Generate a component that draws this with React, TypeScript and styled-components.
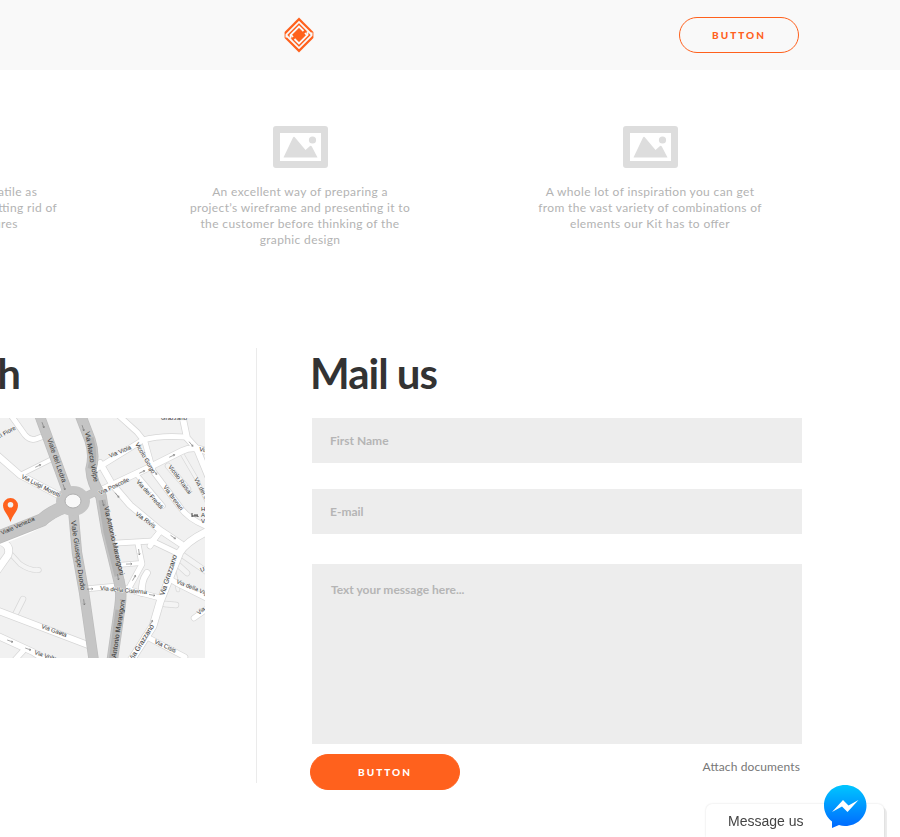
import React from 'react';
import styled, { createGlobalStyle, css } from 'styled-components';

const orange = '#ff611d';

const GlobalStyle = createGlobalStyle`
  * { box-sizing: border-box; }
  html, body { margin: 0; overflow-x: hidden; }
  body {
    background: #fff;
    font-family: Lato, 'Open Sans', sans-serif;
    color: #333;
  }
`;

const Header = styled.header`
  background: #f9f9f9;
`;

const container = css`
  margin-left: -225px;
  margin-right: 75px;
`;

const HeaderInner = styled.div`
  ${container}
  height: 70px;
  display: grid;
  grid-template-columns: 1fr auto 1fr;
  align-items: center;
  padding: 0 26px 0 23px;
`;

const LogoLink = styled.a`
  grid-column: 2;
  display: flex;
`;

const Pill = styled.button<{ $solid?: boolean }>`
  width: ${p => (p.$solid ? 150 : 120)}px;
  height: 36px;
  padding: 0;
  border: 1px solid ${orange};
  border-radius: 18px;
  background: ${p => (p.$solid ? orange : 'transparent')};
  color: ${p => (p.$solid ? '#fff' : orange)};
  font: 900 10px/16px Lato, sans-serif;
  letter-spacing: 2px;
  text-transform: uppercase;
  cursor: pointer;
`;

const HeaderAction = styled.div`
  display: flex;
  justify-content: flex-end;
`;

const Features = styled.section`
  ${container}
  display: grid;
  grid-template-columns: repeat(3, 1fr);
  padding-top: 56px;
`;

const Feature = styled.article`
  display: flex;
  flex-direction: column;
  align-items: center;
  gap: 16px;
`;

const FeatureText = styled.p`
  margin: 0;
  color: #b3b3b3;
  font-size: 12px;
  line-height: 16px;
  letter-spacing: 0.03em;
  font-feature-settings: 'liga' 1;
  text-align: center;
  white-space: pre-line;
`;

const Contact = styled.main`
  ${container}
  display: grid;
  grid-template-columns: 430fr 546fr;
  column-gap: 51px;
  padding: 100px 23px 53px 0;
`;

const Heading = styled.h2`
  margin: 0 0 20px;
  font-size: 42px;
  line-height: 50px;
  font-weight: 700;
  letter-spacing: -1px;
  white-space: nowrap;
`;

const MapSvg = styled.svg`
  display: block;
  width: 100%;
  height: 240px;
`;

const MailColumn = styled.section`
  border-left: 1px solid #ebebeb;
  padding-left: 53px;
`;

const Form = styled.form`
  display: flex;
  flex-direction: column;
`;

const Fields = styled.div`
  display: flex;
  flex-direction: column;
  padding-left: 2px;
`;

const fieldStyle = css`
  display: block;
  width: 100%;
  border: 0;
  border-radius: 0;
  background: #ededed;
  color: #333;
  font: 700 12px/16px Lato, sans-serif;
  outline-color: ${orange};
  &::placeholder { color: #b5b5b5; opacity: 1; }
`;

const TextField = styled.input`
  ${fieldStyle}
  height: 45px;
  padding: 0 18px;
  margin-bottom: 26px;
`;

const MessageField = styled.textarea`
  ${fieldStyle}
  height: 180px;
  margin-top: 4px;
  padding: 18px 19px;
  resize: none;
`;

const Actions = styled.div`
  display: flex;
  justify-content: space-between;
  align-items: flex-start;
  margin-bottom: -7px;
  padding: 10px 2px 0 0;
`;

const AttachLink = styled.a`
  margin-top: 5px;
  color: #777;
  font-size: 12px;
  line-height: 16px;
  letter-spacing: 0.01em;
  font-feature-settings: 'liga' 1;
  text-decoration: none;
`;

const ChatButton = styled.button`
  position: fixed;
  right: 16px;
  bottom: 0;
  width: 178px;
  height: 33px;
  padding: 0 0 0 22px;
  border: 0;
  border-radius: 6px 6px 0 0;
  background: #fff;
  box-shadow: 0 0 2px rgba(0, 0, 0, 0.15), 3px 3px 0 #ececec;
  color: #444;
  font: 400 14px/32px 'Liberation Sans', Arial, sans-serif;
  text-align: left;
  cursor: pointer;
`;

const ChatIcon = styled.svg`
  position: absolute;
  right: 17px;
  bottom: 8px;
`;

function Logo() {
  return (
    <svg width="30" height="36" viewBox="0 0 30 36" role="img" aria-label="Logo">
      <path d="M15 0.5 L29.4 15 V21 L15 35.500 L0.600 21 V15 Z" fill={orange} />
      <g fill="none" stroke="#f9f9f9" strokeWidth="1.8">
        <path d="M2.400 20.500 V17.500 L15 4.900 L27.600 17.500" />
        <path d="M27.600 15.500 V18.500 L15 31.100 L2.400 18.500" />
        <path d="M6.500 21.500 V18 L15 9.500 L19.500 14" />
        <path d="M23.500 14.500 V18 L15 26.500 L10.500 22" />
        <path d="M6.800 17.700 L9 20 M23.200 18.300 L21 16" />
      </g>
    </svg>
  );
}

function Picture() {
  return (
    <svg width="55" height="42" viewBox="0 0 55 42" aria-hidden="true">
      <path
        fill="#ddd"
        fillRule="evenodd"
        d="M3 0H52A3 3 0 0 1 55 3V39A3 3 0 0 1 52 42H3A3 3 0 0 1 0 39V3A3 3 0 0 1 3 0ZM7 7V35H48V7Z"
      />
      <path fill="#ddd" d="M10.5 31.5L20 11.5Q21 10 22 11.5L32.5 24L37 20Q38 19.3 38.8 20.5L44.5 31.5Z" />
      <circle cx="39.5" cy="14" r="3.6" fill="#ddd" />
    </svg>
  );
}

const lanes: [string, number][] = [
  ['M10 -4 L25 17 Q30 23 36 21 L44 18', 5],
  ['M-4 36 L20 57 L64 80', 6],
  ['M22 56 L52 41', 4],
  ['M96 51 L143 22 Q160 17 186 19', 5],
  ['M117 -4 L137 14 L145 24 L153 53 L180 89 Q188 101 208 109', 5],
  ['M182 -4 L187 20 L197 31 L208 58', 6],
  ['M97 74 L150 49 L182 33 Q194 27 208 34', 6],
  ['M100 45 L112 66 L130 87 L160 112 L181 126', 6],
  ['M137 57 L163 88', 4],
  ['M150 128 L160 113', 5],
  ['M117 125 L152 123 L177 135', 5],
  ['M152 123 L159 115', 5],
  ['M208 113 Q187 123 180 134 L168 164 L160 184 L153 208 L130 244', 7],
  ['M85 171 L117 168 L137 174 L160 180', 5],
  ['M138 126 L142 146 L129 170', 5],
  ['M118 147 L141 145', 4],
  ['M147 155 Q141 163 142 175', 6],
  ['M168 160 L180 167 L208 181', 5],
  ['M145 218 L185 239', 5],
  ['M194 200 L208 190', 5],
  ['M-4 192 L88 227', 6],
  ['M-4 217 L33 234 L44 241', 6],
  ['M23 233 L13 244', 5],
  ['M2 124 Q11 128 8 137 L-4 154', 7],
];

const paths: [string, number][] = [
  ['M168 48 L188 71', 5],
  ['M182 36 L196 60 L208 86', 3],
  ['M14 199 L23 181', 5],
  ['M10 135 L20 146 Q30 153 39 152', 4],
  ['M165 186 L176 187', 5],
  ['M174 143 L187 155', 5],
  ['M181 136 L207 154', 5],
  ['M174 152 L178 172', 3],
];

const avenues: [string, number][] = [
  ['M39 -4 L69 78', 9],
  ['M80 -4 L90 22 Q95 37 91 51 Q92 66 101 78 L107 114 L119 163 Q122 174 120 188 L112 244', 10],
  ['M73 90 L77 135 L84 174 L94 244', 9],
  ['M67 88 Q52 93 42 102 L-6 121', 12],
  ['M78 82 L99 72', 7],
];

type Label = [string, number, number, number, number?];

const avenueLabels: Label[] = [
  ['Viale del Ledra', 47, 21, 71],
  ['Via Marco Volpe', 85, 14, 80],
  ['Viale Giuseppe Duodo', 71, 103, 82],
  ['Via Antonio Marangoni', 104, 89, 77],
  ['Antonio Marangoni', 116, 240, -81],
  ['Viale Venezia', 2, 117, -24, 6],
];

const laneLabels: Label[] = [
  ['oberi Fiore', -9, 25, -29],
  ['Via Luigi Moretti', 21, 60, 27],
  ['Via Viola', 110, 40, -23],
  ['Vicolo Gorgo', 135, 26, 60],
  ['Via Poscolle', 100, 77, -25],
  ['Via dei Freddi', 136, 64, 48],
  ['Via Brenari', 163, 69, 54],
  ['Vicolo Raisai', 168, 49, 53],
  ['Via dei Sarti', 194, 61, 62],
  ['Via Rivis', 135, 97, 35],
  ['Via della Cisterna', 100, 172, 5],
  ['Via Grazzano', 164, 178, -72, 7],
  ['Via Grazzano', 132, 244, -58, 7],
  ['Via della Vigna', 176, 165, 22],
  ['Via Gaeta', 41, 210, 20],
  ['Via Cisis', 154, 225, 25],
  ['Via Volta', 34, 236, 18],
  ['Grazzano', 161, 2, 0],
  ['Via', 199, 33, 10],
  ['Via', 199, 197, -40],
  ['U', 201, 154, -20],
  ['H', 201, 93, 0],
  ['A', 201, 99, 0],
  ['V', 201, 105, 0],
];

const arrows: [number, number, number][] = [
  [43, 7, 70], [83, 10, 72], [64, 69, 70], [103, 85, 75], [84, 184, 82], [118, 159, 80],
  [172, 38, -25], [142, 54, -25], [191, 26, 50], [117, 77, 50], [38, 48, -25], [155, 54, 55],
  [90, 171, -3], [152, 177, 10], [139, 134, 82], [129, 146, -2], [134, 160, -60], [151, 205, -60],
  [173, 119, 35], [10, 223, 20], [28, 231, 20],
];

function Roads({ items, fill, edge }: { items: [string, number][]; fill: string; edge: string }) {
  return (
    <g fill="none" strokeLinecap="round" strokeLinejoin="round">
      {items.map(([d, w]) => <path key={`e${d}`} d={d} stroke={edge} strokeWidth={w + 1.4} />)}
      {items.map(([d, w]) => <path key={d} d={d} stroke={fill} strokeWidth={w} />)}
    </g>
  );
}

function StreetNames({ items, size }: { items: Label[]; size: number }) {
  return (
    <>
      {items.map(([name, x, y, angle, own = size]) => (
        <text key={`${name}-${x}-${y}`} fontSize={own} transform={`translate(${x} ${y}) rotate(${angle})`}>
          {name}
        </text>
      ))}
    </>
  );
}

function StreetMap() {
  return (
    <MapSvg viewBox="-225 0 430 240" preserveAspectRatio="xMaxYMid slice" role="img" aria-label="Street map">
      <rect x="-225" width="430" height="240" fill="#f1f1f1" />
      <Roads items={paths} fill="#f4f4f4" edge="#d8d8d8" />
      <Roads items={lanes} fill="#fff" edge="#d6d6d6" />
      <path d="M-6 129 L30 114 L50 104" fill="none" stroke="#fff" strokeWidth="2" />
      <Roads items={avenues} fill="#c5c5c5" edge="#bcbcbc" />
      <path d="M90 20 Q95 37 91 51 M102 82 L107 114 L118 158 M119 192 L112 244" fill="none" stroke="#b4b4b4" strokeWidth="7" />
      <ellipse cx="73" cy="83" rx="17" ry="15" fill="#c5c5c5" />
      <ellipse cx="73" cy="83" rx="8" ry="7" fill="#f8f8f8" stroke="#b0b0b0" />
      <g fill="none" stroke="#777" strokeWidth="0.6">
        {arrows.map(([x, y, a]) => (
          <path key={`${x}-${y}`} transform={`translate(${x} ${y}) rotate(${a})`} d="M-3 0H3M1.5 -1L3 0L1.5 1" />
        ))}
      </g>
      <path d="M192 95V99M192 98H198V99M194 97H198" stroke="#444" fill="none" />
      <g fontFamily="'Liberation Sans', Arial, sans-serif" fill="#333">
        <StreetNames items={avenueLabels} size={7} />
        <g stroke="#f4f4f4" strokeWidth="0.8" paintOrder="stroke">
          <StreetNames items={laneLabels} size={6} />
        </g>
      </g>
      <path
        fill={orange}
        fillRule="evenodd"
        d="M10.5 104C8 96 3 93 3 87.5A7.5 7.5 0 0 1 18 87.5C18 93 13 96 10.5 104ZM10.5 84A2.8 2.8 0 1 0 10.5 89.6A2.8 2.8 0 1 0 10.5 84Z"
      />
    </MapSvg>
  );
}

function Messenger() {
  return (
    <ChatIcon width="44" height="44" viewBox="0 0 44 44" aria-hidden="true">
      <defs>
        <linearGradient id="messenger-fill" x1="0" y1="0" x2="0" y2="1">
          <stop offset="0" stopColor="#00c6ff" />
          <stop offset="1" stopColor="#0068ff" />
        </linearGradient>
      </defs>
      <path
        fill="url(#messenger-fill)"
        d="M22 0C10 0 1 9 1 20.500C1 27 4 32.500 9 36.500V43L16 40C18 40.600 20 41 22 41C34 41 43.500 32 43.500 20.500C43.500 9 34 0 22 0Z"
      />
      <path fill="#fff" d="M9 27L20 15L25.500 20.500L35.500 15L24.500 27L19 21.500Z" />
    </ChatIcon>
  );
}

const features = [
  { text: 'The UI kit that is as versatile as\nyour own ideas are while getting rid of\nmost unwanted features', id: 'versatile' },
  {
    text: 'An excellent way of preparing a\nproject’s wireframe and presenting it to\nthe customer before thinking of the\ngraphic design',
    id: 'wireframe',
  },
  {
    text: 'A whole lot of inspiration you can get\nfrom the vast variety of combinations of\nelements our Kit has to offer',
    id: 'inspiration',
  },
];

export default function App() {
  return (
    <>
      <GlobalStyle />
      <Header>
        <HeaderInner>
          <LogoLink href="#" aria-label="Home"><Logo /></LogoLink>
          <HeaderAction><Pill type="button">Button</Pill></HeaderAction>
        </HeaderInner>
      </Header>
      <Features>
        {features.map(f => (
          <Feature key={f.id}>
            <Picture />
            <FeatureText>{f.text}</FeatureText>
          </Feature>
        ))}
      </Features>
      <Contact>
        <section>
          <Heading>Keep in touch</Heading>
          <StreetMap />
        </section>
        <MailColumn>
          <Heading>Mail us</Heading>
          <Form onSubmit={e => e.preventDefault()}>
            <Fields>
              <TextField type="text" placeholder="First Name" aria-label="First Name" />
              <TextField type="email" placeholder="E-mail" aria-label="E-mail" />
              <MessageField placeholder="Text your message here..." aria-label="Message" />
            </Fields>
            <Actions>
              <Pill $solid type="submit">Button</Pill>
              <AttachLink href="#attach">Attach documents</AttachLink>
            </Actions>
          </Form>
        </MailColumn>
      </Contact>
      <ChatButton type="button">
        Message us
        <Messenger />
      </ChatButton>
    </>
  );
}
